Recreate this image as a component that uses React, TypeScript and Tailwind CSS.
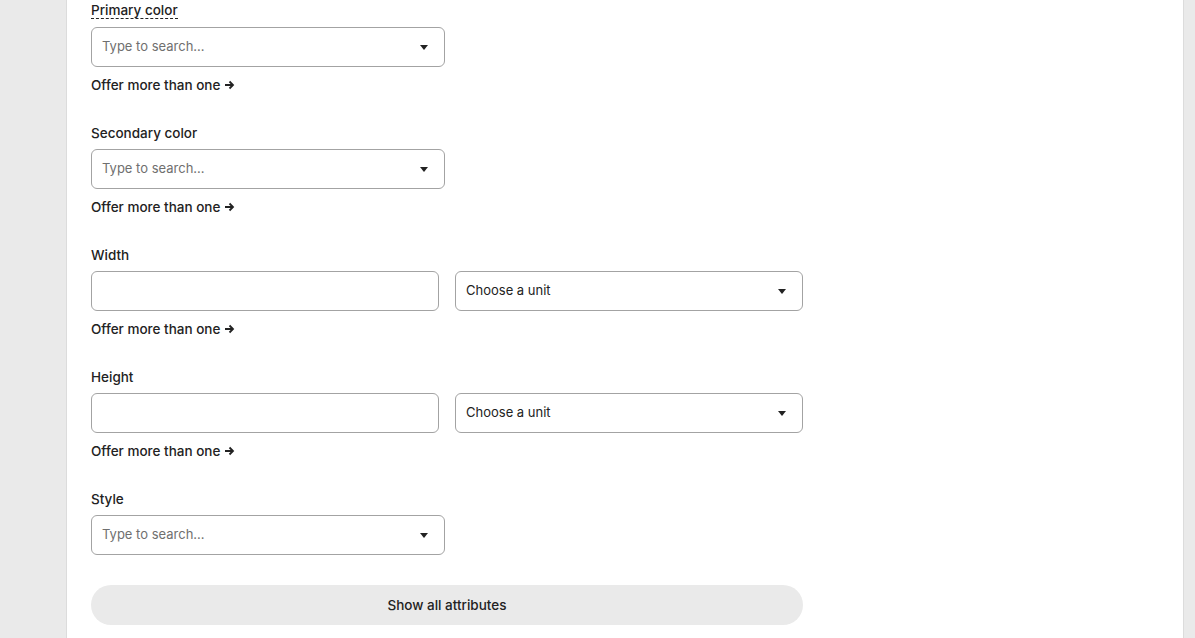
import React from "react";

const Caret = () => (
  <svg width="8" height="5" viewBox="0 0 8 5" className="shrink-0">
    <path d="M0 0h8L4 5z" fill="#222" />
  </svg>
);

const SearchSelect = ({ placeholder, wide }: { placeholder: string; wide?: boolean }) => (
  <div
    className={`flex h-10 items-center justify-between rounded-md border border-[#a3a3a3] bg-white pl-[10px] pr-[16px] ${
      wide ? "w-[348px]" : "w-[354px]"
    }`}
  >
    <span className={wide ? "text-[#222]" : "text-[#6f6f6f]"}>{placeholder}</span>
    <Caret />
  </div>
);

const OfferMore = () => (
  <button className="mt-2 flex h-5 items-center gap-1 text-left text-[13.5px] font-medium text-[#222]">
    Offer more than one
    <svg width="11" height="10" viewBox="0 0 11 10">
      <path d="M1 5h8M5.5 1.5 9 5l-3.5 3.5" stroke="#222" strokeWidth="1.8" fill="none" />
    </svg>
  </button>
);

const Label = ({ children, dashed }: { children: React.ReactNode; dashed?: boolean }) => (
  <div className="mb-1.5 flex h-5 items-center text-[13.5px] font-medium">
    <span
      className={
        dashed
          ? "border-b border-dashed border-[#222] leading-[15px] text-[#222]"
          : "text-[#222]"
      }
    >
      {children}
    </span>
  </div>
);

const Measurement = ({ label }: { label: string }) => (
  <div className="mb-7">
    <Label>{label}</Label>
    <div className="flex gap-4">
      <input className="h-10 w-[348px] rounded-md border border-[#a3a3a3] bg-white" />
      <SearchSelect placeholder="Choose a unit" wide />
    </div>
    <OfferMore />
  </div>
);

export default function App() {
  return (
    <div
      className="flex h-[638px] w-full bg-[#eaeaea] text-[13px]"
      style={{ fontFamily: "Inter, 'Noto Sans', sans-serif" }}
    >
      <div className="w-[66px] shrink-0" />
      <main className="h-full w-[1118px] shrink-0 border-l border-r border-[#dcdcdc] bg-white pl-[24px] pt-px">
        <div className="mb-7">
          <Label dashed>Primary color</Label>
          <SearchSelect placeholder="Type to search..." />
          <OfferMore />
        </div>
        <div className="mb-7">
          <Label>Secondary color</Label>
          <SearchSelect placeholder="Type to search..." />
          <OfferMore />
        </div>
        <Measurement label="Width" />
        <Measurement label="Height" />
        <div>
          <Label>Style</Label>
          <SearchSelect placeholder="Type to search..." />
        </div>
        <button className="mt-[30px] h-10 w-[712px] rounded-full bg-[#eaeaea] text-[13.5px] font-medium text-[#222]">
          Show all attributes
        </button>
      </main>
    </div>
  );
}
